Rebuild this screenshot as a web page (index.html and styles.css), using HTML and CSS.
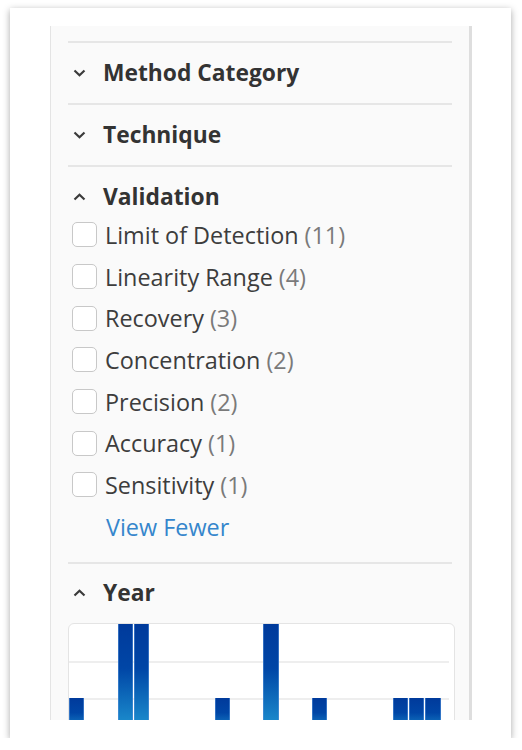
FILE: index.html
```html
<!DOCTYPE html>
<html>
<head>
<meta charset="utf-8">
<link rel="stylesheet" href="styles.css">
</head>
<body>
<div class="card">
  <div class="panel">
    <div class="section">
      <div class="header">
        <svg class="chev" width="13" height="8" viewBox="0 0 13 8"><polyline points="1.5,1.5 6.5,6.2 11.5,1.5" fill="none" stroke="#3a3a3a" stroke-width="2.2"/></svg>
        <span class="title">Method Category</span>
      </div>
    </div>
    <div class="section">
      <div class="header">
        <svg class="chev" width="13" height="8" viewBox="0 0 13 8"><polyline points="1.5,1.5 6.5,6.2 11.5,1.5" fill="none" stroke="#3a3a3a" stroke-width="2.2"/></svg>
        <span class="title">Technique</span>
      </div>
    </div>
    <div class="section open">
      <div class="header">
        <svg class="chev" width="13" height="8" viewBox="0 0 13 8"><polyline points="1.5,6.5 6.5,1.8 11.5,6.5" fill="none" stroke="#3a3a3a" stroke-width="2.2"/></svg>
        <span class="title">Validation</span>
      </div>
      <ul class="items">
        <li class="item"><span class="box"></span><span class="label">Limit of Detection</span><span class="count">(11)</span></li>
        <li class="item"><span class="box"></span><span class="label">Linearity Range</span><span class="count">(4)</span></li>
        <li class="item"><span class="box"></span><span class="label">Recovery</span><span class="count">(3)</span></li>
        <li class="item"><span class="box"></span><span class="label">Concentration</span><span class="count">(2)</span></li>
        <li class="item"><span class="box"></span><span class="label">Precision</span><span class="count">(2)</span></li>
        <li class="item"><span class="box"></span><span class="label">Accuracy</span><span class="count">(1)</span></li>
        <li class="item"><span class="box"></span><span class="label">Sensitivity</span><span class="count">(1)</span></li>
        <li class="item more"><a class="link">View Fewer</a></li>
      </ul>
    </div>
    <div class="section year">
      <div class="header">
        <svg class="chev" width="13" height="8" viewBox="0 0 13 8"><polyline points="1.5,6.5 6.5,1.8 11.5,6.5" fill="none" stroke="#3a3a3a" stroke-width="2.2"/></svg>
        <span class="title">Year</span>
      </div>
      <div class="chart">
        <div class="grid g2"></div>
        <div class="grid g1"></div>
        <div class="bars">
          <div class="slot"><div class="bar v1"></div></div>
          <div class="slot"></div>
          <div class="slot"></div>
          <div class="slot"><div class="bar v3"></div></div>
          <div class="slot"><div class="bar v3"></div></div>
          <div class="slot"></div>
          <div class="slot"></div>
          <div class="slot"></div>
          <div class="slot"></div>
          <div class="slot"><div class="bar v1"></div></div>
          <div class="slot"></div>
          <div class="slot"></div>
          <div class="slot"><div class="bar v3"></div></div>
          <div class="slot"></div>
          <div class="slot"></div>
          <div class="slot"><div class="bar v1"></div></div>
          <div class="slot"></div>
          <div class="slot"></div>
          <div class="slot"></div>
          <div class="slot"></div>
          <div class="slot"><div class="bar v1"></div></div>
          <div class="slot"><div class="bar v1"></div></div>
          <div class="slot"><div class="bar v1"></div></div>
        </div>
      </div>
    </div>
  </div>
</div>
</body>
</html>
```
FILE: styles.css
```css
html, body {
  margin: 0;
  padding: 0;
  background: #ffffff;
}
body {
  font-family: "Open Sans", "Noto Sans", sans-serif;
}
.card {
  box-sizing: border-box;
  margin: 8px 0 0 10px;
  width: 501px;
  height: 730px;
  background: #ffffff;
  box-shadow: 0 2px 7px rgba(0, 0, 0, 0.35);
  padding: 18px 39px 18px 40px;
}
.panel {
  box-sizing: border-box;
  height: 694px;
  overflow: hidden;
  background: #fafafa;
  border-left: 1px solid #e4e4e4;
  border-right: 3px solid #dedede;
  padding: 15px 17px 0 17px;
}
.section {
  border-top: 2px solid #e6e6e6;
}
.header {
  display: flex;
  align-items: center;
  height: 28px;
  padding: 16px 0;
}
.section.open .header,
.section.year .header {
  padding-bottom: 0;
}
.section.year .header {
  padding-top: 15px;
}
.chev {
  margin-left: 5px;
  margin-right: 17px;
  flex: none;
}
.title {
  font-size: 22.8px;
  font-weight: 700;
  color: #333333;
  line-height: 28px;
}
.items {
  list-style: none;
  margin: 3px 0 0 0;
  padding: 0 0 14px 0;
}
.item {
  display: flex;
  align-items: center;
  height: 41.7px;
  font-size: 23.4px;
  line-height: 30px;
  color: #3d3d3d;
}
.box {
  box-sizing: border-box;
  width: 25px;
  height: 25px;
  margin-left: 4px;
  margin-right: 8px;
  background: #ffffff;
  border: 1px solid #c8c8c8;
  border-radius: 5px;
  flex: none;
}
.count {
  color: #7a7a7a;
  margin-left: 6px;
}
.more .link {
  margin-left: 38px;
  color: #3586cc;
}
.chart {
  position: relative;
  margin-top: 16px;
  margin-right: -3px;
  height: 130px;
  background: #ffffff;
  border: 1px solid #e4e4e4;
  border-radius: 6px;
}
.grid {
  position: absolute;
  left: 0;
  right: 5px;
  height: 2px;
  background: #eeeeee;
}
.g2 { top: 37px; }
.g1 { top: 74px; }
.bars {
  position: absolute;
  left: 0;
  top: 0;
  height: 111px;
  display: flex;
  align-items: flex-end;
}
.slot {
  width: 16.2px;
  height: 100%;
  display: flex;
  align-items: flex-end;
}
.bar {
  box-sizing: border-box;
  width: 15.4px;
  background: linear-gradient(to bottom, #003a9b 0%, #0046a6 40%, #1a89cb 88%, #2196d3 100%);
  border-left: 1px solid rgba(90, 150, 220, 0.55);
  border-right: 1px solid rgba(90, 150, 220, 0.55);
}
.v1 { height: 37px; }
.v3 { height: 111px; }
```
